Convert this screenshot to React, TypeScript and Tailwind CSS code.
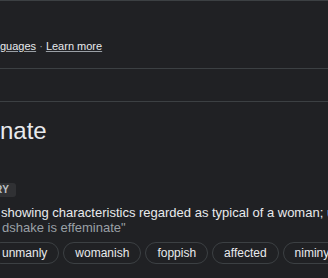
const chips = ["unmanly", "womanish", "foppish", "affected", "niminy-piminy"];

export default function App() {
  return (
    <div className="h-[278px] w-[328px] overflow-hidden bg-[#202124] font-['Liberation_Sans',Arial,sans-serif] text-[#e8eaed]">
      <div className="h-[68px] border-t border-[#3c4043] pt-[38px] text-[11px] leading-[14px] whitespace-nowrap text-[#e8eaed]">
        <span className="underline decoration-[#9aa0a6]">guages</span>
        <span className="text-[#9aa0a6]"> · </span>
        <span className="underline decoration-[#9aa0a6]">Learn more</span>
      </div>
      <div className="h-[34px] border-y border-[#3c4043]" />

      <div className="pt-[15px]">
        <h1 className="text-[24px] leading-[28px] whitespace-nowrap">nate</h1>

        <div className="mt-[38px] flex">
          <span className="-ml-[5px] rounded-[3px] bg-[#303134] pr-[6px] text-[10px] font-bold leading-[14px] tracking-[0.5px] text-[#bdc1c6]">
            RY
          </span>
        </div>

        <p className="mt-[8px] pl-[1px] text-[13px] leading-[15px] whitespace-nowrap">
          showing characteristics regarded as typical of a woman; unmanly.
        </p>
        <p className="pl-[2px] text-[13px] leading-[15px] whitespace-nowrap text-[#9aa0a6]">
          dshake is effeminate"
        </p>

        <div className="-ml-[10px] mt-[7px] flex gap-[4px] whitespace-nowrap">
          {chips.map((c) => (
            <span
              key={c}
              className="rounded-full border border-[#3c4043] px-[11px] text-[12px] leading-[20px] text-[#e8eaed]"
            >
              {c}
            </span>
          ))}
        </div>
      </div>
    </div>
  );
}
